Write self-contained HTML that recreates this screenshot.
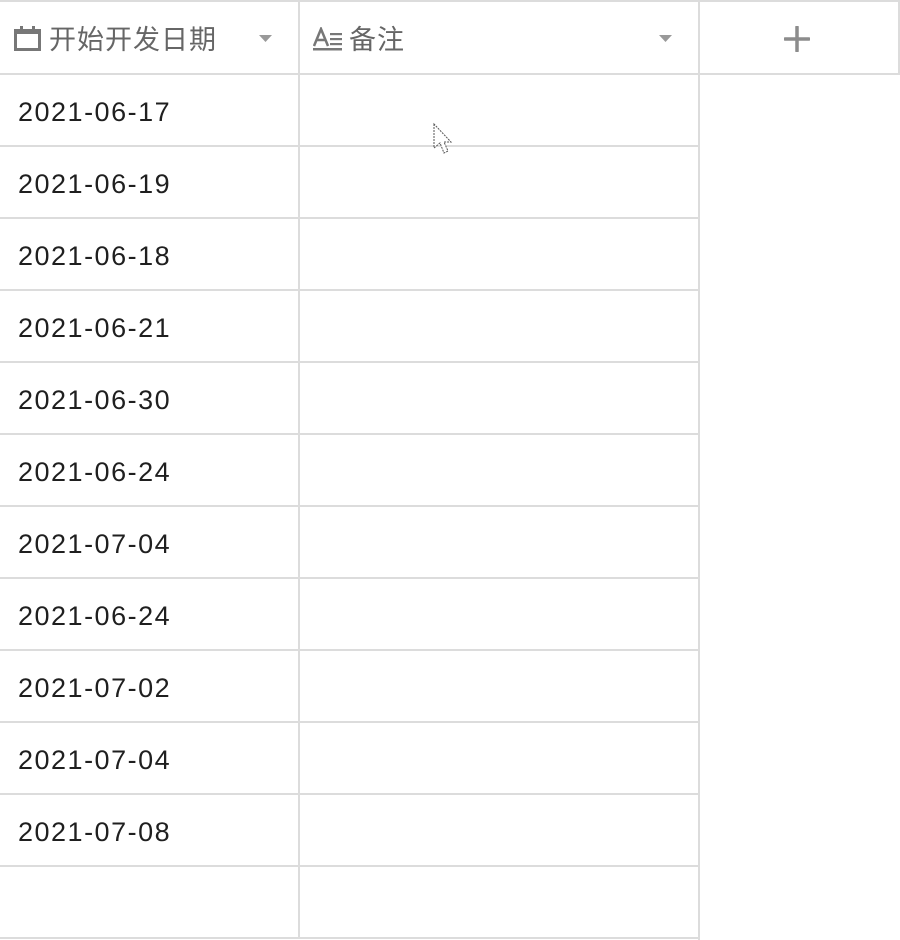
<!DOCTYPE html>
<html><head><meta charset="utf-8"><style>
*{margin:0;padding:0;box-sizing:border-box}
body{width:900px;height:940px;background:#fff;position:relative;overflow:hidden;font-family:"Liberation Sans","Noto Sans CJK SC",sans-serif}
.h{position:absolute;left:0;height:2px;background:#dcdcdc}
.v{position:absolute;top:0;width:2px;background:#dcdcdc}
.d{position:absolute;left:18px;font-size:27px;color:#1f1f1f;letter-spacing:1.5px;line-height:30px}
.ht{position:absolute;top:20px;font-size:27px;color:#666;line-height:36px;letter-spacing:1px;font-family:"Noto Sans CJK SC",sans-serif}
</style></head><body>
<div class="h" style="top:0;width:900px"></div>
<div class="h" style="top:73px;width:900px"></div>
<div class="v" style="left:298px;height:938px"></div>
<div class="v" style="left:698px;height:940px"></div>
<div class="v" style="left:898px;height:75px"></div>
<div class="h" style="top:145px;width:700px"></div>
<div class="h" style="top:217px;width:700px"></div>
<div class="h" style="top:289px;width:700px"></div>
<div class="h" style="top:361px;width:700px"></div>
<div class="h" style="top:433px;width:700px"></div>
<div class="h" style="top:505px;width:700px"></div>
<div class="h" style="top:577px;width:700px"></div>
<div class="h" style="top:649px;width:700px"></div>
<div class="h" style="top:721px;width:700px"></div>
<div class="h" style="top:793px;width:700px"></div>
<div class="h" style="top:865px;width:700px"></div>
<div class="h" style="top:937px;width:700px"></div>

<svg style="position:absolute;left:14px;top:26px" width="28" height="26" viewBox="0 0 28 26">
<rect x="1.5" y="4.5" width="24" height="19" fill="none" stroke="#777" stroke-width="3"/>
<rect x="1" y="3" width="25" height="5" fill="#777"/>
<rect x="6" y="0" width="3" height="5" fill="#777"/><rect x="18" y="0" width="3" height="5" fill="#777"/>
</svg>
<div class="ht" style="left:49px">开始开发日期</div>
<svg style="position:absolute;left:259px;top:34px" width="14" height="9"><path d="M0 1H13L6.5 8Z" fill="#999"/></svg>

<svg style="position:absolute;left:313px;top:27px" width="32" height="24" viewBox="0 0 32 24">
<path d="M1 19L8 2L15 19M4 13H12" fill="none" stroke="#777" stroke-width="2.5"/>
<rect x="0" y="21" width="29" height="2.5" fill="#777"/>
<rect x="17" y="6" width="12" height="2.2" fill="#777"/><rect x="17" y="11" width="12" height="2.2" fill="#777"/><rect x="17" y="16" width="12" height="2.2" fill="#777"/>
</svg>
<div class="ht" style="left:349px">备注</div>
<svg style="position:absolute;left:659px;top:34px" width="14" height="9"><path d="M0 1H13L6.5 8Z" fill="#999"/></svg>

<svg style="position:absolute;left:784px;top:26px" width="26" height="26"><path d="M13 1V25M1 13H25" stroke="#8c8c8c" stroke-width="3.5" stroke-linecap="round"/></svg>

<svg style="position:absolute;left:432px;top:122px" width="22" height="34" viewBox="0 0 22 34"><path d="M2 2V26L8 21L12 31L16 29L12 20H19Z" fill="#fff" stroke="#555" stroke-width="1" stroke-dasharray="2 1"/></svg>

<div class="d" style="top:97px">2021-06-17</div>
<div class="d" style="top:169px">2021-06-19</div>
<div class="d" style="top:241px">2021-06-18</div>
<div class="d" style="top:313px">2021-06-21</div>
<div class="d" style="top:385px">2021-06-30</div>
<div class="d" style="top:457px">2021-06-24</div>
<div class="d" style="top:529px">2021-07-04</div>
<div class="d" style="top:601px">2021-06-24</div>
<div class="d" style="top:673px">2021-07-02</div>
<div class="d" style="top:745px">2021-07-04</div>
<div class="d" style="top:817px">2021-07-08</div>
</body></html>
